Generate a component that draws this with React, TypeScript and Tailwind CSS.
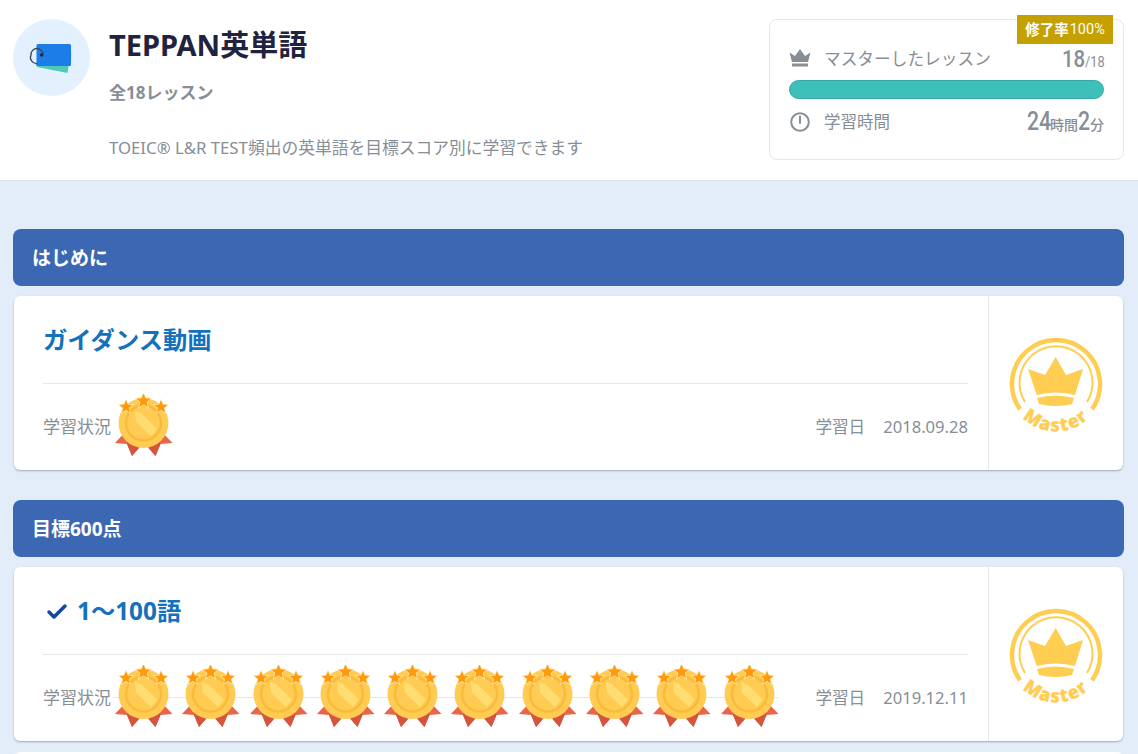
import { Check } from 'lucide-react';

const font = { fontFamily: '"Noto Sans", "Noto Sans CJK JP", sans-serif' };
const digitFont = { fontFamily: 'Roboto, sans-serif' };

function DeckIcon() {
    return (
        <svg width="77" height="77" viewBox="0 0 77 77">
            <circle cx="38.500" cy="38.500" r="38.500" fill="#e3f1ff" />
            <path d="M56 32 L59 33.500 L57.500 47 L55 47 Z" fill="#bfe8e6" />
            <path d="M23 45 L55.500 47 L54.500 54 L24 48 Z" fill="#4fc9b8" />
            <rect x="23.500" y="25" width="34.500" height="22" rx="1.500" fill="#1c7de8" />
            <path d="M30 35 A6 6 0 0 0 18 36 A6 6 0 0 0 24 44.500" fill="none" stroke="#3c4458" strokeWidth="1.300" />
            <circle cx="28.700" cy="36" r="1.800" fill="#1f2a44" />
        </svg>
    );
}

function CrownIcon() {
    return (
        <svg width="22" height="20" viewBox="0 0 22 20" fill="#868e96">
            <path d="M0.500 3.500 L6 7 L11 0 L16 7 L21.500 3.500 L19 13 H3 Z" />
            <rect x="3" y="14.500" width="16" height="3" />
        </svg>
    );
}

function ClockIcon() {
    return (
        <svg width="20" height="20" viewBox="0 0 20 20" fill="none" stroke="#868e96" strokeWidth="2">
            <circle cx="10" cy="10" r="8.800" />
            <path d="M10 4.500 V11" strokeLinecap="round" />
        </svg>
    );
}

const star = (x: number, y: number, r: number) => {
    const pts = [];
    for (let i = 0; i < 10; i++) {
        const a = (Math.PI / 5) * i - Math.PI / 2;
        const rr = i % 2 === 0 ? r : r * 0.45;
        pts.push(`${x + rr * Math.cos(a)},${y + rr * Math.sin(a)}`);
    }
    return pts.join(' ');
};

function Medal() {
    return (
        <svg width="58" height="62" viewBox="0 0 58 62" className="shrink-0">
            <path d="M13 35 L0 49 L12 50 L17 62 L29 48 Z" fill="#e8654a" />
            <path d="M44 35 L57.500 49 L45.500 50 L40.500 62 L28.500 48 Z" fill="#e8654a" />
            <path d="M12 50 L17 62 L24 54 L14 44 Z" fill="#d4553d" />
            <path d="M45.500 50 L40.500 62 L33.500 54 L43.500 44 Z" fill="#d4553d" />
            <circle cx="28.500" cy="29" r="25" fill="#ffcb52" />
            <path d="M3.500 29 A25 25 0 0 0 53.500 29 A25 25 0 0 1 3.500 29 Z" fill="#f5b638" />
            <circle cx="28.500" cy="29" r="17.500" fill="none" stroke="#f8bb3b" strokeWidth="2.500" />
            <path d="M20 17 L26 19 L42 34.500 L36 42 L21 28 Z" fill="#ffdd70" />
            <polygon points={star(11, 13, 8.500)} fill="#ffe9a8" />
            <polygon points={star(28.500, 7, 9.500)} fill="#ffe9a8" />
            <polygon points={star(46, 13, 8.500)} fill="#ffe9a8" />
            <polygon points={star(11, 13, 6.800)} fill="#ff9a10" />
            <polygon points={star(28.500, 7, 7.500)} fill="#ff9a10" />
            <polygon points={star(46, 13, 6.800)} fill="#ff9a10" />
        </svg>
    );
}

function MasterBadge({ id }: { id: string }) {
    return (
        <svg width="96" height="94" viewBox="0 0 96 94" className="overflow-visible">
            <path d="M12 73.300 A44 44 0 1 1 84 73.300" fill="none" stroke="#ffcd52" strokeWidth="4.500" />
            <path d="M17 66 A36.500 36.500 0 1 1 79 66" fill="none" stroke="#ffcd52" strokeWidth="2" />
            <path d="M20 33 L37 39 L47.700 21 L58 39 L75 33 L67 59 Q47.700 54 28.700 59 Z" fill="#ffcd52" />
            <path d="M29 62 Q47.700 57 66 62 L64 68 Q47.700 72 31 68 Z" fill="#ffcd52" />
            <path id={id} d="M8 73 A47 47 0 0 0 88 73" fill="none" />
            <text fontSize="18" fontWeight="800" fill="#ffcd52" stroke="#ffcd52" strokeWidth="0.500" letterSpacing="1.500" style={{ fontFamily: '"Noto Sans", sans-serif' }}>
                <textPath href={`#${id}`} startOffset="50%" textAnchor="middle">Master</textPath>
            </text>
        </svg>
    );
}

function SectionBar({ title }: { title: string }) {
    return (
        <div className="mb-[10.500px] h-[56.500px] rounded-[8px] bg-[#3c67b2] pl-[19px] flex items-center text-[19px] font-bold text-white">
            <span className="mt-[1px]">{title}</span>
        </div>
    );
}

function LessonCard({ id, title, checked, medals, date }: { id: string; title: string; checked?: boolean; medals: number; date: string }) {
    return (
        <div className="mx-[1px] flex h-[174px] rounded-[6px] bg-white shadow-[0_1px_2px_rgba(0,0,0,0.3)]">
            <div className="flex-1 flex flex-col pl-[29px] pr-[20px]">
                <div className="h-[88px] flex items-center gap-[8px] border-b border-[#e5e7eb] text-[24.300px] font-bold text-[#1371bd]">
                    {checked && <Check size={24} strokeWidth={3.5} className="ml-[2px] mt-[2px] text-[#11479e]" />}
                    <span className="mt-[1px]">{title}</span>
                </div>
                <div className="flex-1 relative flex items-center justify-between text-[17px] text-[#868e96]">
                    {medals > 1 && <div className="absolute left-[70px] right-[190px] top-[42px] border-t border-[#e5e7eb]" />}
                    <div className="relative flex items-center gap-[4px]">
                        <span>学習状況</span>
                        <div className="flex gap-[9.300px] -mt-[4px]">
                            {Array.from({ length: medals }, (_, i) => <Medal key={i} />)}
                        </div>
                    </div>
                    <div className="relative flex items-center gap-[18px] text-[16.600px]">
                        <span>学習日</span>
                        <span>{date}</span>
                    </div>
                </div>
            </div>
            <div className="w-[135px] border-l border-[#e5e7eb] flex items-center justify-center">
                <MasterBadge id={id} />
            </div>
        </div>
    );
}

export default function App() {
    return (
        <div className="h-[754px] overflow-hidden bg-[#e3edfa]" style={font}>
            <header className="h-[181px] bg-white border-b border-[#e0e0e0] flex justify-between pl-[13px] pr-[14px]">
                <div className="flex">
                    <div className="pt-[18.500px]"><DeckIcon /></div>
                    <div className="ml-[19px]">
                        <h1 className="mt-[24px] text-[29px] leading-[42px] font-bold text-[#1f2340]">TEPPAN英単語</h1>
                        <p className="mt-[15px] text-[17px] leading-[24px] font-bold text-[#868e96]">全18レッスン</p>
                        <p className="mt-[31px] text-[16.750px] leading-[24px] text-[#868e96]">TOEIC® L&amp;R TEST頻出の英単語を目標スコア別に学習できます</p>
                    </div>
                </div>
                <div className="relative mt-[19px] h-[141px] w-[355px] rounded-[8px] border border-[#e5e7eb] px-[19px] pt-[24px]">
                    <div className="absolute right-[10px] -top-[5px] h-[29px] w-[96px] bg-[#c4a000] text-white text-[14.500px] flex items-center justify-center gap-[1px]">
                        <span className="font-bold">修了率</span>
                        <span style={digitFont}>100%</span>
                    </div>
                    <div className="flex items-center justify-between h-[30px] text-[#868e96]">
                        <div className="flex items-center gap-[13px]">
                            <CrownIcon />
                            <span className="text-[16.700px]">マスターしたレッスン</span>
                        </div>
                        <div className="flex items-baseline font-medium" style={digitFont}>
                            <span className="inline-block w-[23px] origin-left scale-x-[.85] text-[24px]">18</span>
                            <span className="inline-block w-[19px] origin-left scale-x-[.85] text-[15px] font-normal">/18</span>
                        </div>
                    </div>
                    <div className="mt-[6px] h-[19px] rounded-full bg-[#3cc0b9] border border-[#33aaa3]" />
                    <div className="flex items-center justify-between mt-[5px] h-[36px] text-[#868e96]">
                        <div className="flex items-center gap-[14px] pl-[1px]">
                            <ClockIcon />
                            <span className="text-[16.500px]">学習時間</span>
                        </div>
                        <div className="flex items-baseline font-medium" style={digitFont}>
                            <span className="inline-block w-[23px] origin-left scale-x-[.85] text-[25px]">24</span>
                            <span className="text-[14px]" style={font}>時間</span>
                            <span className="inline-block w-[12px] origin-left scale-x-[.85] text-[25px]">2</span>
                            <span className="text-[14px]" style={font}>分</span>
                        </div>
                    </div>
                </div>
            </header>
            <main className="pl-[13px] pr-[14px] pt-[48px]">
                <section>
                    <SectionBar title="はじめに" />
                    <LessonCard id="masterArc1" title="ガイダンス動画" medals={1} date="2018.09.28" />
                </section>
                <section className="mt-[30px]">
                    <SectionBar title="目標600点" />
                    <LessonCard id="masterArc2" title="1〜100語" checked medals={10} date="2019.12.11" />
                </section>
                <div className="mx-[1px] mt-[11px] h-[40px] rounded-[6px] bg-white" />
            </main>
        </div>
    );
}
